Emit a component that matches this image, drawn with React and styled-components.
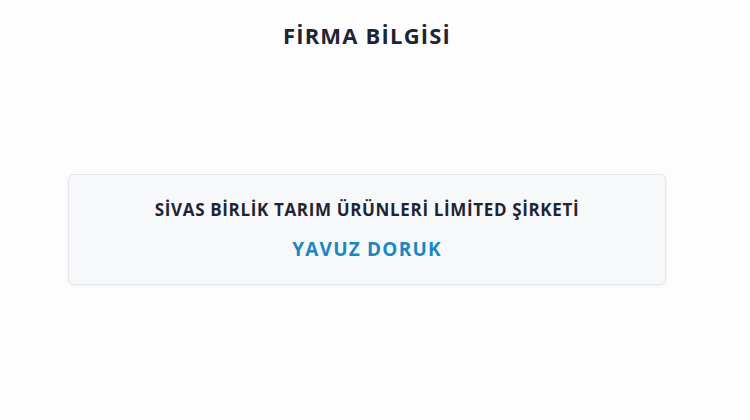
import styled, { createGlobalStyle } from "styled-components";

const GlobalStyle = createGlobalStyle`
  html, body {
    margin: 0;
    padding: 0;
    background: #fdfdfe;
  }
  body {
    font-family: "Open Sans", "Noto Sans", sans-serif;
  }
`;

const Page = styled.main`
  width: 734px;
  height: 420px;
  display: flex;
  flex-direction: column;
  align-items: center;
  background: #fdfdfe;
  overflow: hidden;
`;

const Title = styled.h1`
  margin: 20px 0 0;
  font-size: 22px;
  font-weight: 700;
  letter-spacing: 1.2px;
  color: #1e2433;
  line-height: 30px;
`;

const Card = styled.section`
  box-sizing: border-box;
  width: 598px;
  height: 111px;
  margin-top: 124px;
  background: #f7f8fa;
  border: 1px solid #e3e6ea;
  border-radius: 6px;
  box-shadow: 0 1px 3px rgba(15, 23, 42, 0.06);
  display: flex;
  flex-direction: column;
  align-items: center;
  justify-content: center;
  gap: 16px;
`;

const Company = styled.div`
  font-size: 17px;
  font-weight: 700;
  letter-spacing: 0.65px;
  color: #1e2433;
  line-height: 22px;
`;

const Person = styled.div`
  font-size: 19px;
  font-weight: 700;
  letter-spacing: 1.2px;
  color: #1b86c4;
  line-height: 24px;
`;

export default function App() {
  return (
    <>
      <GlobalStyle />
      <Page>
        <Title>FİRMA BİLGİSİ</Title>
        <Card>
          <Company>SİVAS BİRLİK TARIM ÜRÜNLERİ LİMİTED ŞİRKETİ</Company>
          <Person>YAVUZ DORUK</Person>
        </Card>
      </Page>
    </>
  );
}
